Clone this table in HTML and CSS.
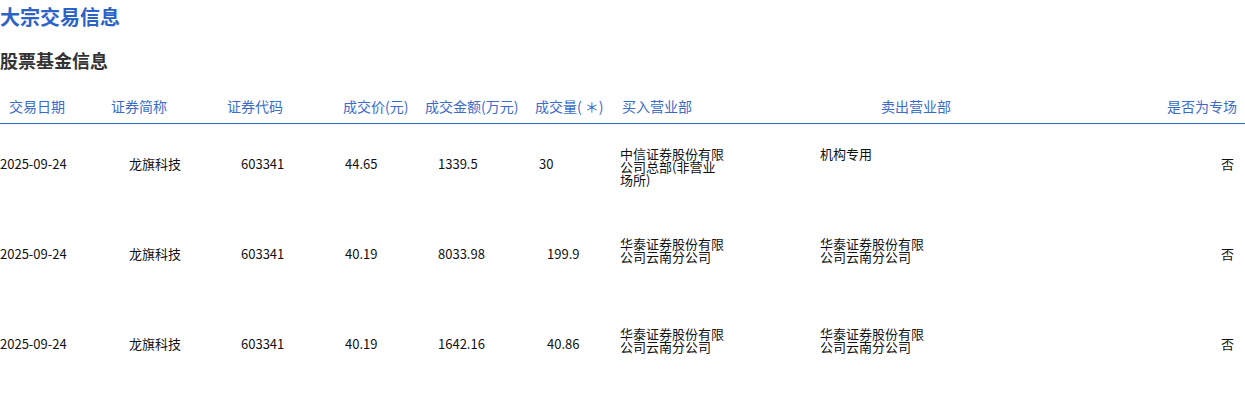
FILE: index.html
```html
<!DOCTYPE html>
<html lang="zh-CN">
<head>
<meta charset="utf-8">
<title>大宗交易信息</title>
<link rel="stylesheet" href="styles.css">
</head>
<body>
<h1 class="title">大宗交易信息</h1>
<h2 class="subtitle">股票基金信息</h2>
<div class="table">
  <div class="row head">
    <div class="c1">交易日期</div>
    <div class="c2">证券简称</div>
    <div class="c3">证券代码</div>
    <div class="c4">成交价(元)</div>
    <div class="c5">成交金额(万元)</div>
    <div class="c6">成交量( ＊)</div>
    <div class="c7">买入营业部</div>
    <div class="c8">卖出营业部</div>
    <div class="c9">是否为专场</div>
  </div>
  <div class="row body">
    <div class="c1">2025-09-24</div>
    <div class="c2">龙旗科技</div>
    <div class="c3">603341</div>
    <div class="c4">44.65</div>
    <div class="c5">1339.5</div>
    <div class="c6 short">30</div>
    <div class="c7 broker">中信证券股份有限公司总部(非营业场所)</div>
    <div class="c8 broker">机构专用</div>
    <div class="c9">否</div>
  </div>
  <div class="row body">
    <div class="c1">2025-09-24</div>
    <div class="c2">龙旗科技</div>
    <div class="c3">603341</div>
    <div class="c4">40.19</div>
    <div class="c5">8033.98</div>
    <div class="c6">199.9</div>
    <div class="c7 broker">华泰证券股份有限公司云南分公司</div>
    <div class="c8 broker">华泰证券股份有限公司云南分公司</div>
    <div class="c9">否</div>
  </div>
  <div class="row body">
    <div class="c1">2025-09-24</div>
    <div class="c2">龙旗科技</div>
    <div class="c3">603341</div>
    <div class="c4">40.19</div>
    <div class="c5">1642.16</div>
    <div class="c6">40.86</div>
    <div class="c7 broker">华泰证券股份有限公司云南分公司</div>
    <div class="c8 broker">华泰证券股份有限公司云南分公司</div>
    <div class="c9">否</div>
  </div>
</div>
</body>
</html>
```
FILE: styles.css
```css
html, body {
  margin: 0;
  padding: 0;
  background: #fff;
}
body {
  font-family: "Noto Sans CJK SC", "Noto Sans", sans-serif;
  width: 1245px;
  height: 394px;
  overflow: hidden;
}
.title {
  margin: 0;
  padding-top: 3px;
  font-size: 20px;
  line-height: 28px;
  font-weight: bold;
  color: #2b63c6;
}
.subtitle {
  margin: 17px 0 0;
  font-size: 18px;
  line-height: 24px;
  font-weight: bold;
  color: #333;
}
.table {
  margin-top: 24px;
}
.row {
  display: grid;
  grid-template-columns: 95px 110px 115px 100px 108px 84px 188px 200px 1fr;
  box-sizing: border-box;
}
.row.head {
  font-size: 14px;
  line-height: 20px;
  color: #3a6ccb;
  padding-bottom: 7px;
  border-bottom: 1px solid #3566c2;
}
.row.head .c1 { padding-left: 9px; }
.row.head .c2 { padding-left: 16px; }
.row.head .c3 { padding-left: 22px; }
.row.head .c4 { padding-left: 23px; }
.row.head .c5 { padding-left: 5px; }
.row.head .c6 { padding-left: 7px; }
.row.head .c7 { padding-left: 10px; }
.row.head .c8 { padding-left: 81px; }
.row.head .c9 { text-align: right; padding-right: 8px; }

.row.body {
  height: 90px;
  padding-bottom: 12px;
  align-items: center;
  font-size: 13px;
  line-height: 13px;
  color: #111;
}
.row.body .c1 { padding-left: 0; }
.row.body .c2 { padding-left: 34px; }
.row.body .c3 { padding-left: 36px; }
.row.body .c4 { padding-left: 25px; }
.row.body .c5 { padding-left: 18px; }
.row.body .c6 { padding-left: 19px; }
.row.body .c6.short { padding-left: 11px; }
.row.body .c7 { padding-left: 8px; }
.row.body .c8 { padding-left: 20px; }
.row.body .c9 { text-align: right; padding-right: 11px; }
.row.body .broker {
  align-self: start;
  margin-top: 23px;
}
.row.body .c7.broker > *, .row.body .c7.broker {
  max-width: 105px;
}
.row.body .c8.broker {
  width: 105px;
}
```
